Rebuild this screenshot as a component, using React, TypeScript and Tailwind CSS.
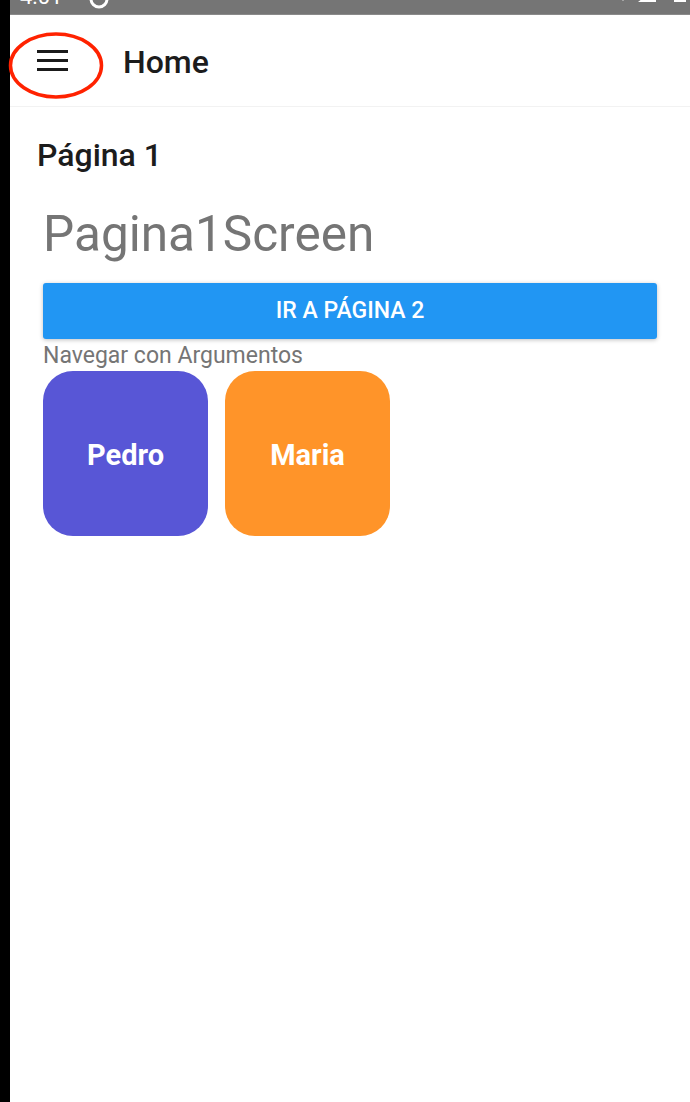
import React from "react";

export default function App() {
  return (
    <div className="flex h-[1102px] w-[690px] bg-white" style={{ fontFamily: "Roboto, 'Noto Sans', sans-serif" }}>
      <div className="w-[10px] shrink-0 bg-black" />
      <div className="flex flex-1 flex-col">
        {/* status bar */}
        <div className="relative h-[15px] shrink-0 overflow-hidden bg-[#757575] border-b border-[#8a8a8a]">
          <div className="absolute left-[10px] top-[-16px] text-[22px] leading-[26px] text-white">4:01</div>
          <svg className="absolute left-[78px] top-[-12px]" width="22" height="22" viewBox="0 0 22 22">
            <circle cx="11" cy="11" r="8" fill="none" stroke="white" strokeWidth="3" />
          </svg>
          <svg className="absolute left-[602px] top-[-12px]" width="78" height="22" viewBox="0 0 78 22">
            <path d="M2 0 L20 0 L11 13 Z" fill="white" />
            <path d="M26 14 L44 0 L44 14 Z" fill="white" />
            <rect x="62" y="0" width="12" height="14" fill="white" />
          </svg>
        </div>
        {/* header */}
        <div className="relative flex h-[92px] shrink-0 items-center border-b border-[#f2f2f2] bg-white">
          <div className="ml-[27px] flex w-[31px] flex-col gap-[6px]">
            <div className="h-[3px] bg-[#1a1a1a]" />
            <div className="h-[3px] bg-[#1a1a1a]" />
            <div className="h-[3px] bg-[#1a1a1a]" />
          </div>
          <div className="ml-[55px] mt-[3px] text-[32px] font-medium leading-none text-[#1c1c1c]">Home</div>
          <svg className="absolute left-[-3px] top-[16px]" width="98" height="69" viewBox="0 0 98 69">
            <ellipse cx="49" cy="34.5" rx="45.5" ry="31.5" fill="none" stroke="#ff2200" strokeWidth="3.5" />
          </svg>
        </div>
        {/* content */}
        <div className="flex flex-col px-[33px]">
          <div className="-ml-[6px] mt-[30px] text-[32px] font-medium leading-[36px] text-[#1c1c1c]">Página 1</div>
          <div className="mt-[32px] text-[49.5px] leading-[58px] text-[#757575]">Pagina1Screen</div>
          <div className="mt-[20px] flex h-[56px] items-center justify-center rounded-[3px] bg-[#2196F3] text-[23px] font-medium text-white shadow-[0_1px_4px_rgba(0,0,0,0.25)]">
            IR A PÁGINA 2
          </div>
          <div className="mt-[3px] text-[23px] leading-[27px] text-[#757575]">Navegar con Argumentos</div>
          <div className="mt-[2px] flex gap-[17px]">
            <div className="flex h-[165px] w-[165px] items-center justify-center rounded-[30px] bg-[#5856D6] pt-[4px] text-[29px] font-bold text-white">Pedro</div>
            <div className="flex h-[165px] w-[165px] items-center justify-center rounded-[30px] bg-[#FF9429] pt-[4px] text-[29px] font-bold text-white">Maria</div>
          </div>
        </div>
      </div>
    </div>
  );
}
